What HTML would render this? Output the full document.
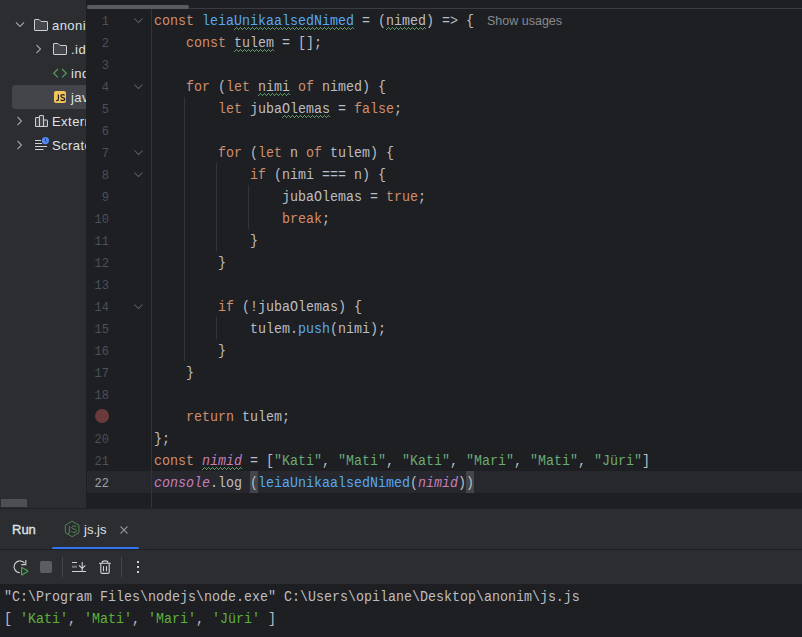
<!DOCTYPE html>
<html><head><meta charset="utf-8">
<style>
*{margin:0;padding:0;box-sizing:border-box}
html,body{width:802px;height:637px;overflow:hidden;background:#1E1F22}
body{position:relative;font-family:"Liberation Sans",sans-serif}
.abs{position:absolute}
#left{left:0;top:0;width:86px;height:508px;background:#2B2D30;overflow:hidden}
#leftsep{left:86px;top:0;width:1px;height:508px;background:#1E1F22}
#editor{left:87px;top:0;width:715px;height:508px;background:#1E1F22;overflow:hidden}
.tree{position:absolute;height:22px;white-space:nowrap;font-size:13px;letter-spacing:0.45px;color:#DFE1E5;line-height:22px}
.code{position:absolute;left:67px;margin-top:2px;transform:scaleY(1.1);transform-origin:0 14px;height:22px;line-height:22px;font-family:"Liberation Mono",monospace;font-size:13.333px;color:#BCBEC4;white-space:pre}
.ln{position:absolute;left:0;margin-top:2px;transform:scaleY(1.12);transform-origin:0 14px;width:22px;text-align:right;height:22px;line-height:22px;font-family:"Liberation Mono",monospace;font-size:12px;color:#4B5059}
.cur{color:#A1A3AB}
.k{color:#CF8E6D}
.f{color:#56A8F5}
.s{color:#6AAB73}
.g{color:#C77DBB;font-style:italic}
.br{}
.cs{color:#5FB13C}
#bottom{left:0;top:509px;width:802px;height:75px;background:#2B2D30}
#console{left:0;top:584px;width:802px;height:53px;background:#1E1F22}
.con{position:absolute;left:4px;margin-top:2px;transform:scaleY(1.1);transform-origin:0 14px;height:22px;line-height:22px;font-family:"Liberation Mono",monospace;font-size:13.333px;color:#BCBEC4;white-space:pre}
</style></head><body>
<div id="left" class="abs">
<div class="abs" style="left:12px;top:85px;width:90px;height:24px;border-radius:4px;background:#43454A"></div>
<svg class="abs" style="left:12px;top:17px" width="16" height="16" viewBox="0 0 16 16"><path d="M4 5.5l4 4 4-4" fill="none" stroke="#9DA0A8" stroke-width="1.1"/></svg>
<svg class="abs" style="left:33px;top:17px" width="16" height="16" viewBox="0 0 16 16"><path d="M1.5 3C1.5 2.72 1.72 2.5 2 2.5H5.8C5.93 2.5 6.05 2.55 6.15 2.65L7.85 4.35C7.95 4.45 8.07 4.5 8.2 4.5H14C14.28 4.5 14.5 4.72 14.5 5V13C14.5 13.28 14.28 13.5 14 13.5H2C1.72 13.5 1.5 13.28 1.5 13V3Z" fill="#43454A" stroke="#CED0D6"/></svg>
<div class="tree" style="left:52px;top:15px">anonim</div>
<svg class="abs" style="left:31px;top:41px" width="16" height="16" viewBox="0 0 16 16"><path d="M5.5 4l4 4-4 4" fill="none" stroke="#9DA0A8" stroke-width="1.1"/></svg>
<svg class="abs" style="left:52px;top:41px" width="16" height="16" viewBox="0 0 16 16"><path d="M1.5 3C1.5 2.72 1.72 2.5 2 2.5H5.8C5.93 2.5 6.05 2.55 6.15 2.65L7.85 4.35C7.95 4.45 8.07 4.5 8.2 4.5H14C14.28 4.5 14.5 4.72 14.5 5V13C14.5 13.28 14.28 13.5 14 13.5H2C1.72 13.5 1.5 13.28 1.5 13V3Z" fill="#43454A" stroke="#CED0D6"/></svg>
<div class="tree" style="left:71px;top:39px">.idea</div>
<svg class="abs" style="left:52px;top:65px" width="16" height="16" viewBox="0 0 16 16"><path d="M5.9 4L1.7 8.2 5.9 12.4M10.1 4L14.3 8.2 10.1 12.4" fill="none" stroke="#529A5A" stroke-width="1.25"/></svg>
<div class="tree" style="left:71px;top:63px">index.html</div>
<svg class="abs" style="left:52px;top:89px" width="16" height="16" viewBox="0 0 16 16"><rect x="2" y="2" width="12" height="12" rx="2" fill="#F2C55C"/><path d="M6.4 5.6V10.2C6.4 11.1 5.9 11.6 5 11.6H4.2M12.6 6.4C12.2 5.9 11.5 5.6 10.7 5.6 9.6 5.6 8.8 6.2 8.8 7.1 8.8 9 12.8 8.2 12.8 10.1 12.8 11 12 11.7 10.8 11.7 9.9 11.7 9.1 11.3 8.6 10.7" fill="none" stroke="#231F20" stroke-width="1.2"/></svg>
<div class="tree" style="left:71px;top:87px">javascript.js</div>
<svg class="abs" style="left:12px;top:113px" width="16" height="16" viewBox="0 0 16 16"><path d="M5.5 4l4 4-4 4" fill="none" stroke="#9DA0A8" stroke-width="1.1"/></svg>
<svg class="abs" style="left:33px;top:113px" width="16" height="16" viewBox="0 0 16 16"><path d="M2.5 13.5V5a.5.5 0 0 1 .5-.5h3.5V3a.5.5 0 0 1 .5-.5h3a.5.5 0 0 1 .5.5v4h3.5a.5.5 0 0 1 .5.5v6z" fill="#43454A" stroke="#CED0D6" stroke-linejoin="round"/><path d="M6.5 4.5v9M10.5 7v6.5" fill="none" stroke="#CED0D6"/></svg>
<div class="tree" style="left:52px;top:111px">External Libraries</div>
<svg class="abs" style="left:12px;top:137px" width="16" height="16" viewBox="0 0 16 16"><path d="M5.5 4l4 4-4 4" fill="none" stroke="#9DA0A8" stroke-width="1.1"/></svg>
<svg class="abs" style="left:33px;top:137px" width="18" height="16" viewBox="0 0 18 16"><path d="M2 3.5h6M2 6.5h7M2 9.5h12M2 12.5h8.5" fill="none" stroke="#CED0D6" stroke-width="1.1"/><circle cx="12.4" cy="3.6" r="3.6" fill="#548AF7"/><path d="M12.4 1.6v2.2l1.3 1.2" fill="none" stroke="#2B2D30" stroke-width="0.9"/></svg>
<div class="tree" style="left:52px;top:135px">Scratches and Consoles</div>
<div class="abs" style="left:1px;top:499px;width:26px;height:8px;background:#4D4F53"></div>
</div>
<div id="leftsep" class="abs"></div>
<div id="editor" class="abs">
<div class="abs" style="left:0;top:8px;width:715px;height:1px;background:#393B40"></div>
<div class="abs" style="left:0;top:5px;width:102px;height:4px;border-radius:2px;background:#595B60"></div>
<div class="abs" style="left:0;top:471px;width:715px;height:22px;background:#26282E"></div>
<div class="abs" style="left:163px;top:471px;width:8px;height:22px;background:#43454A"></div>
<div class="abs" style="left:379px;top:471px;width:8px;height:22px;background:#43454A"></div>
<div class="abs" style="left:64px;top:9px;width:1px;height:499px;background:#313438"></div>
<div class="abs" style="left:97px;top:97px;width:1px;height:264px;background:#313438"></div>
<div class="abs" style="left:129px;top:163px;width:1px;height:88px;background:#313438"></div>
<div class="abs" style="left:161px;top:185px;width:1px;height:44px;background:#313438"></div>
<div class="abs" style="left:129px;top:317px;width:1px;height:22px;background:#313438"></div>
<svg class="abs" style="left:147px;top:27px" width="120" height="3" viewBox="0 0 120 3"><path d="M0 2h1v1h-1zM1 1h1v1h-1zM2 0h1v1h-1zM3 1h1v1h-1zM4 2h1v1h-1zM5 1h1v1h-1zM6 0h1v1h-1zM7 1h1v1h-1zM8 2h1v1h-1zM9 1h1v1h-1zM10 0h1v1h-1zM11 1h1v1h-1zM12 2h1v1h-1zM13 1h1v1h-1zM14 0h1v1h-1zM15 1h1v1h-1zM16 2h1v1h-1zM17 1h1v1h-1zM18 0h1v1h-1zM19 1h1v1h-1zM20 2h1v1h-1zM21 1h1v1h-1zM22 0h1v1h-1zM23 1h1v1h-1zM24 2h1v1h-1zM25 1h1v1h-1zM26 0h1v1h-1zM27 1h1v1h-1zM28 2h1v1h-1zM29 1h1v1h-1zM30 0h1v1h-1zM31 1h1v1h-1zM32 2h1v1h-1zM33 1h1v1h-1zM34 0h1v1h-1zM35 1h1v1h-1zM36 2h1v1h-1zM37 1h1v1h-1zM38 0h1v1h-1zM39 1h1v1h-1zM40 2h1v1h-1zM41 1h1v1h-1zM42 0h1v1h-1zM43 1h1v1h-1zM44 2h1v1h-1zM45 1h1v1h-1zM46 0h1v1h-1zM47 1h1v1h-1zM48 2h1v1h-1zM49 1h1v1h-1zM50 0h1v1h-1zM51 1h1v1h-1zM52 2h1v1h-1zM53 1h1v1h-1zM54 0h1v1h-1zM55 1h1v1h-1zM56 2h1v1h-1zM57 1h1v1h-1zM58 0h1v1h-1zM59 1h1v1h-1zM60 2h1v1h-1zM61 1h1v1h-1zM62 0h1v1h-1zM63 1h1v1h-1zM64 2h1v1h-1zM65 1h1v1h-1zM66 0h1v1h-1zM67 1h1v1h-1zM68 2h1v1h-1zM69 1h1v1h-1zM70 0h1v1h-1zM71 1h1v1h-1zM72 2h1v1h-1zM73 1h1v1h-1zM74 0h1v1h-1zM75 1h1v1h-1zM76 2h1v1h-1zM77 1h1v1h-1zM78 0h1v1h-1zM79 1h1v1h-1zM80 2h1v1h-1zM81 1h1v1h-1zM82 0h1v1h-1zM83 1h1v1h-1zM84 2h1v1h-1zM85 1h1v1h-1zM86 0h1v1h-1zM87 1h1v1h-1zM88 2h1v1h-1zM89 1h1v1h-1zM90 0h1v1h-1zM91 1h1v1h-1zM92 2h1v1h-1zM93 1h1v1h-1zM94 0h1v1h-1zM95 1h1v1h-1zM96 2h1v1h-1zM97 1h1v1h-1zM98 0h1v1h-1zM99 1h1v1h-1zM100 2h1v1h-1zM101 1h1v1h-1zM102 0h1v1h-1zM103 1h1v1h-1zM104 2h1v1h-1zM105 1h1v1h-1zM106 0h1v1h-1zM107 1h1v1h-1zM108 2h1v1h-1zM109 1h1v1h-1zM110 0h1v1h-1zM111 1h1v1h-1zM112 2h1v1h-1zM113 1h1v1h-1zM114 0h1v1h-1zM115 1h1v1h-1zM116 2h1v1h-1zM117 1h1v1h-1zM118 0h1v1h-1zM119 1h1v1h-1z" fill="#5E9A63"/></svg>
<svg class="abs" style="left:299px;top:27px" width="40" height="3" viewBox="0 0 40 3"><path d="M0 2h1v1h-1zM1 1h1v1h-1zM2 0h1v1h-1zM3 1h1v1h-1zM4 2h1v1h-1zM5 1h1v1h-1zM6 0h1v1h-1zM7 1h1v1h-1zM8 2h1v1h-1zM9 1h1v1h-1zM10 0h1v1h-1zM11 1h1v1h-1zM12 2h1v1h-1zM13 1h1v1h-1zM14 0h1v1h-1zM15 1h1v1h-1zM16 2h1v1h-1zM17 1h1v1h-1zM18 0h1v1h-1zM19 1h1v1h-1zM20 2h1v1h-1zM21 1h1v1h-1zM22 0h1v1h-1zM23 1h1v1h-1zM24 2h1v1h-1zM25 1h1v1h-1zM26 0h1v1h-1zM27 1h1v1h-1zM28 2h1v1h-1zM29 1h1v1h-1zM30 0h1v1h-1zM31 1h1v1h-1zM32 2h1v1h-1zM33 1h1v1h-1zM34 0h1v1h-1zM35 1h1v1h-1zM36 2h1v1h-1zM37 1h1v1h-1zM38 0h1v1h-1zM39 1h1v1h-1z" fill="#5E9A63"/></svg>
<svg class="abs" style="left:147px;top:49px" width="40" height="3" viewBox="0 0 40 3"><path d="M0 2h1v1h-1zM1 1h1v1h-1zM2 0h1v1h-1zM3 1h1v1h-1zM4 2h1v1h-1zM5 1h1v1h-1zM6 0h1v1h-1zM7 1h1v1h-1zM8 2h1v1h-1zM9 1h1v1h-1zM10 0h1v1h-1zM11 1h1v1h-1zM12 2h1v1h-1zM13 1h1v1h-1zM14 0h1v1h-1zM15 1h1v1h-1zM16 2h1v1h-1zM17 1h1v1h-1zM18 0h1v1h-1zM19 1h1v1h-1zM20 2h1v1h-1zM21 1h1v1h-1zM22 0h1v1h-1zM23 1h1v1h-1zM24 2h1v1h-1zM25 1h1v1h-1zM26 0h1v1h-1zM27 1h1v1h-1zM28 2h1v1h-1zM29 1h1v1h-1zM30 0h1v1h-1zM31 1h1v1h-1zM32 2h1v1h-1zM33 1h1v1h-1zM34 0h1v1h-1zM35 1h1v1h-1zM36 2h1v1h-1zM37 1h1v1h-1zM38 0h1v1h-1zM39 1h1v1h-1z" fill="#5E9A63"/></svg>
<svg class="abs" style="left:171px;top:93px" width="32" height="3" viewBox="0 0 32 3"><path d="M0 2h1v1h-1zM1 1h1v1h-1zM2 0h1v1h-1zM3 1h1v1h-1zM4 2h1v1h-1zM5 1h1v1h-1zM6 0h1v1h-1zM7 1h1v1h-1zM8 2h1v1h-1zM9 1h1v1h-1zM10 0h1v1h-1zM11 1h1v1h-1zM12 2h1v1h-1zM13 1h1v1h-1zM14 0h1v1h-1zM15 1h1v1h-1zM16 2h1v1h-1zM17 1h1v1h-1zM18 0h1v1h-1zM19 1h1v1h-1zM20 2h1v1h-1zM21 1h1v1h-1zM22 0h1v1h-1zM23 1h1v1h-1zM24 2h1v1h-1zM25 1h1v1h-1zM26 0h1v1h-1zM27 1h1v1h-1zM28 2h1v1h-1zM29 1h1v1h-1zM30 0h1v1h-1zM31 1h1v1h-1z" fill="#5E9A63"/></svg>
<svg class="abs" style="left:195px;top:115px" width="48" height="3" viewBox="0 0 48 3"><path d="M0 2h1v1h-1zM1 1h1v1h-1zM2 0h1v1h-1zM3 1h1v1h-1zM4 2h1v1h-1zM5 1h1v1h-1zM6 0h1v1h-1zM7 1h1v1h-1zM8 2h1v1h-1zM9 1h1v1h-1zM10 0h1v1h-1zM11 1h1v1h-1zM12 2h1v1h-1zM13 1h1v1h-1zM14 0h1v1h-1zM15 1h1v1h-1zM16 2h1v1h-1zM17 1h1v1h-1zM18 0h1v1h-1zM19 1h1v1h-1zM20 2h1v1h-1zM21 1h1v1h-1zM22 0h1v1h-1zM23 1h1v1h-1zM24 2h1v1h-1zM25 1h1v1h-1zM26 0h1v1h-1zM27 1h1v1h-1zM28 2h1v1h-1zM29 1h1v1h-1zM30 0h1v1h-1zM31 1h1v1h-1zM32 2h1v1h-1zM33 1h1v1h-1zM34 0h1v1h-1zM35 1h1v1h-1zM36 2h1v1h-1zM37 1h1v1h-1zM38 0h1v1h-1zM39 1h1v1h-1zM40 2h1v1h-1zM41 1h1v1h-1zM42 0h1v1h-1zM43 1h1v1h-1zM44 2h1v1h-1zM45 1h1v1h-1zM46 0h1v1h-1zM47 1h1v1h-1z" fill="#5E9A63"/></svg>
<svg class="abs" style="left:115px;top:467px" width="40" height="3" viewBox="0 0 40 3"><path d="M0 2h1v1h-1zM1 1h1v1h-1zM2 0h1v1h-1zM3 1h1v1h-1zM4 2h1v1h-1zM5 1h1v1h-1zM6 0h1v1h-1zM7 1h1v1h-1zM8 2h1v1h-1zM9 1h1v1h-1zM10 0h1v1h-1zM11 1h1v1h-1zM12 2h1v1h-1zM13 1h1v1h-1zM14 0h1v1h-1zM15 1h1v1h-1zM16 2h1v1h-1zM17 1h1v1h-1zM18 0h1v1h-1zM19 1h1v1h-1zM20 2h1v1h-1zM21 1h1v1h-1zM22 0h1v1h-1zM23 1h1v1h-1zM24 2h1v1h-1zM25 1h1v1h-1zM26 0h1v1h-1zM27 1h1v1h-1zM28 2h1v1h-1zM29 1h1v1h-1zM30 0h1v1h-1zM31 1h1v1h-1zM32 2h1v1h-1zM33 1h1v1h-1zM34 0h1v1h-1zM35 1h1v1h-1zM36 2h1v1h-1zM37 1h1v1h-1zM38 0h1v1h-1zM39 1h1v1h-1z" fill="#5E9A63"/></svg>
<div class="ln" style="top:9px">1</div>
<div class="code" style="top:9px"><span class="k">const</span> <span class="f">leiaUnikaalsedNimed</span> = (nimed) =&gt; {</div>
<div class="ln" style="top:31px">2</div>
<div class="code" style="top:31px">    <span class="k">const</span> tulem = [];</div>
<div class="ln" style="top:53px">3</div>
<div class="code" style="top:53px"></div>
<div class="ln" style="top:75px">4</div>
<div class="code" style="top:75px">    <span class="k">for</span> (<span class="k">let</span> nimi <span class="k">of</span> nimed) {</div>
<div class="ln" style="top:97px">5</div>
<div class="code" style="top:97px">        <span class="k">let</span> jubaOlemas = <span class="k">false</span>;</div>
<div class="ln" style="top:119px">6</div>
<div class="code" style="top:119px"></div>
<div class="ln" style="top:141px">7</div>
<div class="code" style="top:141px">        <span class="k">for</span> (<span class="k">let</span> n <span class="k">of</span> tulem) {</div>
<div class="ln" style="top:163px">8</div>
<div class="code" style="top:163px">            <span class="k">if</span> (nimi === n) {</div>
<div class="ln" style="top:185px">9</div>
<div class="code" style="top:185px">                jubaOlemas = <span class="k">true</span>;</div>
<div class="ln" style="top:207px">10</div>
<div class="code" style="top:207px">                <span class="k">break</span>;</div>
<div class="ln" style="top:229px">11</div>
<div class="code" style="top:229px">            }</div>
<div class="ln" style="top:251px">12</div>
<div class="code" style="top:251px">        }</div>
<div class="ln" style="top:273px">13</div>
<div class="code" style="top:273px"></div>
<div class="ln" style="top:295px">14</div>
<div class="code" style="top:295px">        <span class="k">if</span> (!jubaOlemas) {</div>
<div class="ln" style="top:317px">15</div>
<div class="code" style="top:317px">            tulem.<span class="f">push</span>(nimi);</div>
<div class="ln" style="top:339px">16</div>
<div class="code" style="top:339px">        }</div>
<div class="ln" style="top:361px">17</div>
<div class="code" style="top:361px">    }</div>
<div class="ln" style="top:383px">18</div>
<div class="code" style="top:383px"></div>
<div class="abs" style="left:8px;top:409px;width:14px;height:14px;border-radius:50%;background:#6B3A3C"></div>
<div class="code" style="top:405px">    <span class="k">return</span> tulem;</div>
<div class="ln" style="top:427px">20</div>
<div class="code" style="top:427px">};</div>
<div class="ln" style="top:449px">21</div>
<div class="code" style="top:449px"><span class="k">const</span> <span class="g">nimid</span> = [<span class="s">"Kati"</span>, <span class="s">"Mati"</span>, <span class="s">"Kati"</span>, <span class="s">"Mari"</span>, <span class="s">"Mati"</span>, <span class="s">"Jüri"</span>]</div>
<div class="ln cur" style="top:471px">22</div>
<div class="code" style="top:471px"><span class="g">console</span>.log <span class="br">(</span><span class="f">leiaUnikaalsedNimed</span>(<span class="g">nimid</span>)<span class="br">)</span></div>
<svg class="abs" style="left:43px;top:12px" width="16" height="16" viewBox="0 0 16 16"><path d="M4.5 6.5l4 4 4-4" fill="none" stroke="#5F636A" stroke-width="1.05"/></svg>
<svg class="abs" style="left:43px;top:78px" width="16" height="16" viewBox="0 0 16 16"><path d="M4.5 6.5l4 4 4-4" fill="none" stroke="#5F636A" stroke-width="1.05"/></svg>
<svg class="abs" style="left:43px;top:144px" width="16" height="16" viewBox="0 0 16 16"><path d="M4.5 6.5l4 4 4-4" fill="none" stroke="#5F636A" stroke-width="1.05"/></svg>
<svg class="abs" style="left:43px;top:166px" width="16" height="16" viewBox="0 0 16 16"><path d="M4.5 6.5l4 4 4-4" fill="none" stroke="#5F636A" stroke-width="1.05"/></svg>
<svg class="abs" style="left:43px;top:298px" width="16" height="16" viewBox="0 0 16 16"><path d="M4.5 6.5l4 4 4-4" fill="none" stroke="#5F636A" stroke-width="1.05"/></svg>
<div class="abs" style="left:400px;top:10px;height:22px;line-height:22px;font-size:12.5px;color:#868A91;white-space:nowrap">Show usages</div>
</div>
<div id="bottom" class="abs">
<div class="abs" style="left:12px;top:10px;height:22px;line-height:22px;font-size:13px;color:#DFE1E5;-webkit-text-stroke:0.35px #DFE1E5">Run</div>
<svg class="abs" style="left:64px;top:11px" width="16" height="18" viewBox="0 0 16 18"><path d="M8.1 1.2L14.9 5.2v7.5L8.1 16.7 1.3 12.7V5.2z" fill="none" stroke="#4E8752" stroke-width="1"/><path d="M5.4 6v6.8L3.6 13.6" fill="none" stroke="#4E8752" stroke-width="1"/><path d="M12.4 6.9C12 6.2 11 6 10 6 8.7 6 7.7 6.5 7.7 7.5 7.7 9.4 12.5 8.6 12.5 10.8 12.5 11.8 11.5 12.4 10 12.4 8.8 12.4 7.9 12 7.4 11.3" fill="none" stroke="#4E8752" stroke-width="1"/></svg>
<div class="abs" style="left:84px;top:10px;height:22px;line-height:22px;font-size:13px;color:#DFE1E5">js.js</div>
<svg class="abs" style="left:116px;top:13px" width="16" height="16" viewBox="0 0 16 16"><path d="M4.5 4.5l7 7M11.5 4.5l-7 7" fill="none" stroke="#8C8F94" stroke-width="1.1"/></svg>
<div class="abs" style="left:52px;top:38px;width:87px;height:3px;border-radius:1.5px;background:#3574F0"></div>
<div class="abs" style="left:0;top:40px;width:802px;height:1px;background:#1E1F22"></div>
<svg class="abs" style="left:12px;top:50px" width="18" height="18" viewBox="0 0 18 18"><path d="M7.9 13.7A5.9 5.9 0 1 1 12.6 4.2" fill="none" stroke="#CED0D6" stroke-width="1.1"/><path d="M13.8 1v4.6H9.2" fill="none" stroke="#CED0D6" stroke-width="1.1"/><path d="M9.6 8.6v6.8c0 .4.4.6.7.4l5.3-3.2c.3-.2.3-.6 0-.8l-5.3-3.2c-.3-.2-.7 0-.7.4z" fill="#253A2A" stroke="#57A85E" stroke-width="1.1" stroke-linejoin="round"/></svg>
<div class="abs" style="left:40px;top:52px;width:12px;height:12px;border-radius:2px;background:#5C5D60"></div>
<div class="abs" style="left:62px;top:48px;width:1px;height:20px;background:#43454A"></div>
<svg class="abs" style="left:71px;top:50px" width="16" height="16" viewBox="0 0 16 16"><path d="M1 3.5h5M1 12.5h14M11.2 3v9M8 6.3l3.2 3.2 3.2-3.2" fill="none" stroke="#CED0D6" stroke-width="1.1"/><rect x="1" y="6.6" width="5" height="2.2" fill="#6F737A"/></svg>
<svg class="abs" style="left:97px;top:50px" width="16" height="16" viewBox="0 0 16 16"><path d="M5.2 3.8V3.2C5.2 1.4 10.8 1.4 10.8 3.2V3.8M2.5 4.3h11M3.8 4.5V13a1.4 1.4 0 0 0 1.4 1.4h5.6A1.4 1.4 0 0 0 12.2 13V4.5M6.5 7.5v4.2M9.5 7.5v4.2" fill="none" stroke="#CED0D6" stroke-width="1.1" stroke-linecap="round"/></svg>
<div class="abs" style="left:121px;top:48px;width:1px;height:20px;background:#43454A"></div>
<div class="abs" style="left:137px;top:52px;width:2px;height:2px;background:#CED0D6"></div>
<div class="abs" style="left:137px;top:57px;width:2px;height:2px;background:#CED0D6"></div>
<div class="abs" style="left:137px;top:62px;width:2px;height:2px;background:#CED0D6"></div>
</div>
<div id="console" class="abs">
<div class="con" style="top:1px">"C:\Program Files\nodejs\node.exe" C:\Users\opilane\Desktop\anonim\js.js</div>
<div class="con" style="top:23px">[ <span class="cs">'Kati'</span>, <span class="cs">'Mati'</span>, <span class="cs">'Mari'</span>, <span class="cs">'Jüri'</span> ]</div>
</div>
</body></html>
